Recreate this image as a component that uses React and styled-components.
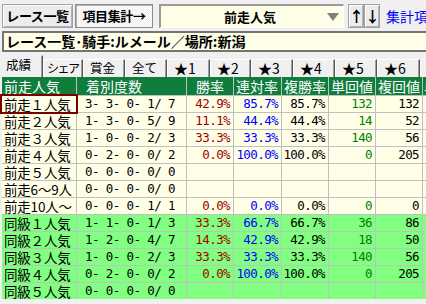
import React from "react";
import styled, { createGlobalStyle, css } from "styled-components";

const GlobalStyle = createGlobalStyle`
  html, body {
    margin: 0;
    padding: 0;
    background: #f0f0f0;
  }
  body {
    font-family: "Noto Sans CJK JP", "Noto Sans", sans-serif;
  }
`;

const Screen = styled.div`
  width: 426px;
  height: 304px;
  overflow: hidden;
  background: #f0f0f0;
  color: #000;
`;

// 上部ツールバー
const TopBar = styled.div`
  display: flex;
  align-items: center;
  height: 24px;
  padding: 4px 0 0 2px;
  white-space: nowrap;
`;

const ToolButton = styled.button`
  box-sizing: border-box;
  flex: none;
  width: ${(p) => p.$width}px;
  height: 24px;
  margin: 0 ${(p) => p.$gap || 0}px 0 0;
  padding: 0;
  font-family: inherit;
  font-size: 13px;
  font-weight: bold;
  letter-spacing: -0.4px;
  white-space: nowrap;
  overflow: hidden;
  color: #000;
  line-height: 20px;
  border: 1px solid #a0a0a0;
  background: #ececec;
  box-shadow: inset 1px 1px #ffffff, inset -1px -1px #b4b4b4;
  ${(p) =>
    p.$pressed &&
    css`
      background: repeating-conic-gradient(#ffffff 0 25%, #ededed 0 50%) 0 0 / 2px 2px;
      border: 1px solid #8c8c8c;
      box-shadow: inset 1px 1px #b0b0b0;
    `}
`;

const Combo = styled.div`
  box-sizing: border-box;
  flex: none;
  display: flex;
  align-items: center;
  width: 185px;
  height: 24px;
  margin-left: 6px;
  padding: 0 4px 0 0;
  background: #ffffe8;
  border-top: 2px solid #9a9a9a;
  border-left: 2px solid #9a9a9a;
  border-bottom: 1px solid #ffffff;
  border-right: 1px solid #ffffff;
`;

const ComboText = styled.div`
  flex: 1;
  text-align: center;
  font-size: 13px;
  font-weight: bold;
  padding-left: 12px;
`;

const ArrowButton = styled(ToolButton)`
  font-size: 15px;
  line-height: 20px;
  letter-spacing: 0;
`;

const ArrowGroup = styled.div`
  display: flex;
  flex: none;
  margin-left: 4px;
`;

const LinkText = styled.span`
  margin-left: 6px;
  color: #0000ff;
  font-size: 14px;
  white-space: nowrap;
`;

// タイトル欄
const TitleBar = styled.div`
  box-sizing: border-box;
  width: 440px;
  height: 21px;
  margin: 3px 0 0 2px;
  padding-left: 2px;
  background: #ffffe8;
  border: 2px solid #747474;
  font-size: 14px;
  font-weight: bold;
  line-height: 17px;
  white-space: nowrap;
  overflow: hidden;
`;

// タブ
const TabBar = styled.div`
  display: flex;
  align-items: flex-end;
  height: 22px;
  margin-top: 3px;
  padding-left: 2px;
  white-space: nowrap;
`;

const Tab = styled.div`
  box-sizing: border-box;
  flex: none;
  width: ${(p) => p.$width}px;
  height: ${(p) => (p.$active ? 22 : 18)}px;
  padding: 0 0 0 ${(p) => (p.$active ? 3 : p.$narrow ? 3 : 6)}px;
  font-size: ${(p) => (p.$star ? 14 : p.$narrow ? 12 : 12.5)}px;
  line-height: ${(p) => (p.$active ? 18 : 16)}px;
  letter-spacing: ${(p) => (p.$narrow ? -1.5 : 0)}px;
  overflow: hidden;
  border-top: 1px solid ${(p) => (p.$active ? "transparent" : "#ffffff")};
  border-left: 1px solid ${(p) => (p.$active ? "transparent" : "#ffffff")};
  border-right: 1px solid #555555;
  box-shadow: inset -1px 0 #a0a0a0;
`;

// 集計表
const Grid = styled.div`
  display: grid;
  grid-template-columns: 74px 109px 46px 47px 46px 46px 46px 40px;
  grid-template-rows: 18px;
  grid-auto-rows: 16px;
  gap: 1px;
  width: 461px;
  margin-left: 2px;
  background: #c0c0c0;
`;

const HeadCell = styled.div`
  background: #0f7d3c;
  color: #ffffff;
  font-size: 14px;
  line-height: 18px;
  padding-left: ${(p) => p.$pad}px;
  white-space: nowrap;
  overflow: hidden;
`;

const Cell = styled.div`
  position: relative;
  background: ${(p) => (p.$green ? "#80ff80" : "#ffffe8")};
  color: ${(p) => p.$color || "#000"};
  line-height: 16px;
  white-space: pre;
  overflow: hidden;
  ${(p) =>
    p.$kind === "label"
      ? css`
          font-size: 13.5px;
          padding-left: 2px;
          letter-spacing: -0.2px;
        `
      : css`
          font-family: "DejaVu Sans Mono", monospace;
          font-size: 12.5px;
          letter-spacing: -0.6px;
          text-align: ${p.$kind === "count" ? "left" : "right"};
          padding: 0 ${p.$kind === "count" ? 0 : 3}px 0 ${p.$kind === "count" ? 8 : 0}px;
        `}
  ${(p) =>
    p.$selected &&
    css`
      overflow: visible;
      outline: 2px solid #7a0000;
      outline-offset: 0px;
      z-index: 1;
    `}
`;

const DownTriangle = () => (
  <svg width="12" height="8" viewBox="0 0 12 8">
    <polygon points="0,0 12,0 6,8" fill="#808080" />
  </svg>
);

const headers = [
  { t: "前走人気", pad: 2 },
  { t: "着別度数", pad: 9 },
  { t: "勝率", pad: 9 },
  { t: "連対率", pad: 2 },
  { t: "複勝率", pad: 2 },
  { t: "単回値", pad: 2 },
  { t: "複回値", pad: 2 },
  { t: "単勝", pad: 1 },
];

const rows = [
  ["前走１人気", "3- 3- 0- 1/ 7", "42.9%", "85.7%", "85.7%", "132", "132"],
  ["前走２人気", "1- 3- 0- 5/ 9", "11.1%", "44.4%", "44.4%", "14", "52"],
  ["前走３人気", "1- 0- 0- 2/ 3", "33.3%", "33.3%", "33.3%", "140", "56"],
  ["前走４人気", "0- 2- 0- 0/ 2", "0.0%", "100.0%", "100.0%", "0", "205"],
  ["前走５人気", "0- 0- 0- 0/ 0", "", "", "", "", ""],
  ["前走6～9人", "0- 0- 0- 0/ 0", "", "", "", "", ""],
  ["前走10人～", "0- 0- 0- 1/ 1", "0.0%", "0.0%", "0.0%", "0", "0"],
  ["同級１人気", "1- 1- 0- 1/ 3", "33.3%", "66.7%", "66.7%", "36", "86"],
  ["同級２人気", "1- 2- 0- 4/ 7", "14.3%", "42.9%", "42.9%", "18", "50"],
  ["同級３人気", "1- 0- 0- 2/ 3", "33.3%", "33.3%", "33.3%", "140", "56"],
  ["同級４人気", "0- 2- 0- 0/ 2", "0.0%", "100.0%", "100.0%", "0", "205"],
  ["同級５人気", "0- 0- 0- 0/ 0", "", "", "", "", ""],
];

const valueColors = ["#a00000", "#0000ff", "#000000", "#008000", "#000000"];

const tabs = [
  { t: "成績", w: 41, active: true },
  { t: "シェア", w: 40, narrow: true },
  { t: "賞金", w: 42 },
  { t: "全て", w: 42 },
  { t: "★1", w: 43, star: true },
  { t: "★2", w: 41, star: true },
  { t: "★3", w: 42, star: true },
  { t: "★4", w: 42, star: true },
  { t: "★5", w: 42, star: true },
  { t: "★6", w: 43, star: true },
  { t: "★7", w: 42, star: true },
];

const App = () => {
  return (
    <Screen>
      <GlobalStyle />
      <TopBar>
        <ToolButton $width={71} $gap={2}>レース一覧</ToolButton>
        <ToolButton $width={78} $pressed>項目集計→</ToolButton>
        <Combo>
          <ComboText>前走人気</ComboText>
          <DownTriangle />
        </Combo>
        <ArrowGroup>
          <ArrowButton $width={16}>↑</ArrowButton>
          <ArrowButton $width={16}>↓</ArrowButton>
        </ArrowGroup>
        <LinkText>集計項目の設定</LinkText>
      </TopBar>

      <TitleBar>レース一覧･騎手:ルメール／場所:新潟</TitleBar>

      <TabBar>
        {tabs.map((tab) => (
          <Tab
            key={tab.t}
            $width={tab.w}
            $active={tab.active}
            $narrow={tab.narrow}
            $star={tab.star}
          >
            {tab.t}
          </Tab>
        ))}
      </TabBar>

      <Grid>
        {headers.map((h) => (
          <HeadCell key={h.t} $pad={h.pad}>
            {h.t}
          </HeadCell>
        ))}
        {rows.map((row, i) => {
          const green = i >= 7;
          return (
            <React.Fragment key={row[0]}>
              <Cell $kind="label" $green={green} $selected={i === 0}>
                {row[0]}
              </Cell>
              <Cell $kind="count" $green={green}>
                {row[1]}
              </Cell>
              {row.slice(2).map((v, j) => (
                <Cell key={j} $kind="num" $green={green} $color={valueColors[j]}>
                  {v}
                </Cell>
              ))}
              <Cell $kind="num" $green={green} />
            </React.Fragment>
          );
        })}
      </Grid>
    </Screen>
  );
};

export default App;
